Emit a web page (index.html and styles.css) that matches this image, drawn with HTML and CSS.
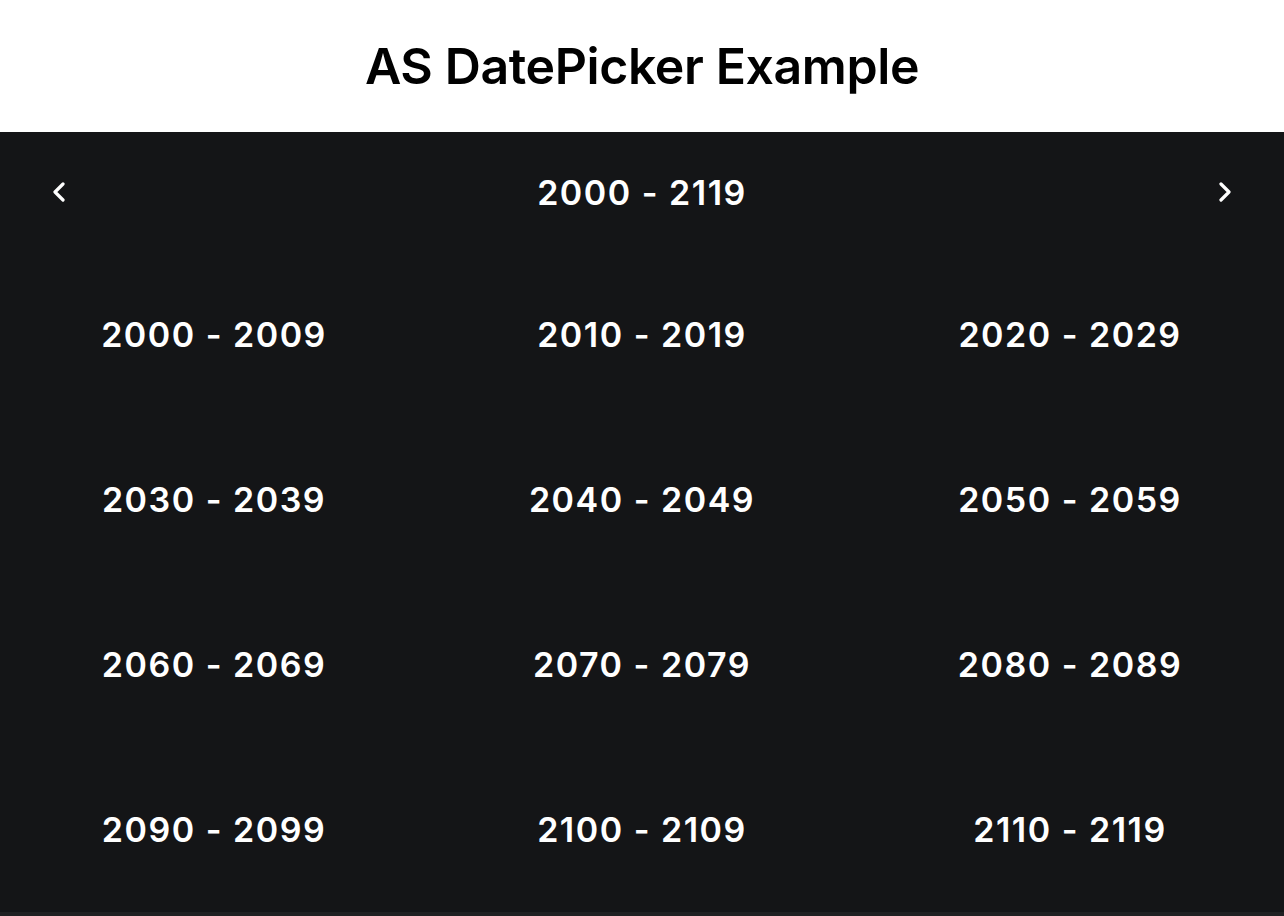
FILE: index.html
```html
<!DOCTYPE html>
<html lang="en">
<head>
<meta charset="utf-8">
<title>AS DatePicker Example</title>
<link rel="stylesheet" href="styles.css">
</head>
<body>
<header class="app-header">
  <h1 class="app-title">AS DatePicker Example</h1>
</header>
<main class="picker">
  <div class="picker-nav">
    <button class="nav-btn" aria-label="Previous">
      <svg viewBox="0 0 14 20" width="14" height="20"><path d="M11 2 L3 10 L11 18" fill="none" stroke="#fff" stroke-width="3.2" stroke-linecap="round" stroke-linejoin="round"/></svg>
    </button>
    <div class="nav-title">2000 - 2119</div>
    <button class="nav-btn" aria-label="Next">
      <svg viewBox="0 0 14 20" width="14" height="20"><path d="M3 2 L11 10 L3 18" fill="none" stroke="#fff" stroke-width="3.2" stroke-linecap="round" stroke-linejoin="round"/></svg>
    </button>
  </div>
  <div class="decade-grid">
    <div class="cell">2000 - 2009</div>
    <div class="cell">2010 - 2019</div>
    <div class="cell">2020 - 2029</div>
    <div class="cell">2030 - 2039</div>
    <div class="cell">2040 - 2049</div>
    <div class="cell">2050 - 2059</div>
    <div class="cell">2060 - 2069</div>
    <div class="cell">2070 - 2079</div>
    <div class="cell">2080 - 2089</div>
    <div class="cell">2090 - 2099</div>
    <div class="cell">2100 - 2109</div>
    <div class="cell">2110 - 2119</div>
  </div>
</main>
<div class="bottom-strip"></div>
</body>
</html>
```

FILE: styles.css
```css
html, body {
  margin: 0;
  padding: 0;
}
body {
  font-family: Inter, "Noto Sans", sans-serif;
  background: #1f2022;
  width: 1284px;
  height: 916px;
  overflow: hidden;
}
.app-header {
  height: 132px;
  background: #ffffff;
  display: flex;
  align-items: center;
  justify-content: center;
}
.app-title {
  margin: 0;
  font-size: 50px;
  font-weight: 600;
  color: #000;
  letter-spacing: -0.4px;
}
.picker {
  background: #141517;
  color: #fff;
}
.picker-nav {
  height: 120px;
  display: flex;
  align-items: center;
  justify-content: space-between;
  padding: 0 45px 0 45px;
}
.nav-btn {
  width: 28px;
  height: 28px;
  padding: 0;
  border: 0;
  background: transparent;
  display: flex;
  align-items: center;
  justify-content: center;
}
.nav-title, .cell {
  font-size: 34px;
  font-weight: 600;
  letter-spacing: 1.5px;
}
.decade-grid {
  display: grid;
  grid-template-columns: repeat(3, 1fr);
  grid-auto-rows: 165px;
}
.cell {
  display: flex;
  align-items: center;
  justify-content: center;
}
.bottom-strip {
  height: 4px;
}
```
